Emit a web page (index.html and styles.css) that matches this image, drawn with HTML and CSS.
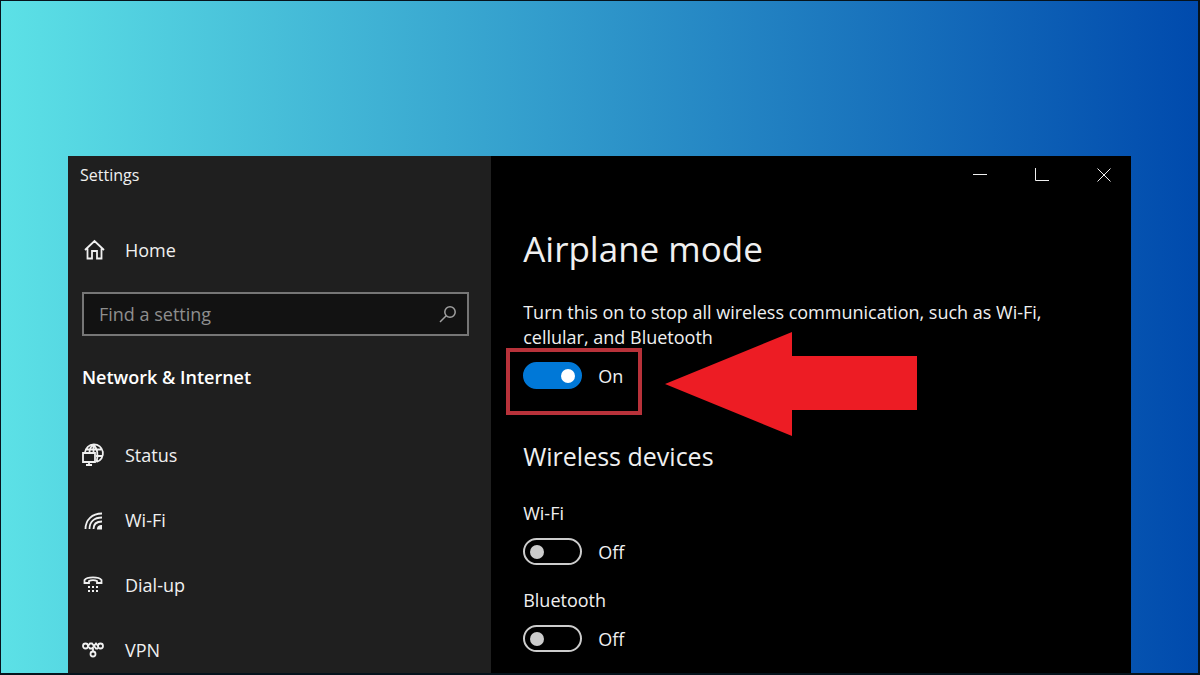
FILE: index.html
```
<!DOCTYPE html>
<html lang="en">
<head>
    <meta charset="UTF-8">
    <meta name="viewport" content="width=device-width, initial-scale=1.0">
    <title>Settings - Airplane mode</title>
    <link rel="stylesheet" href="styles.css">
</head>
<body>
    <div class="window">
        <aside class="sidebar">
            <div class="app-title">Settings</div>

            <a class="nav-link home" href="#home">
                <svg class="icon" viewBox="0 0 22 22">
                    <path d="M3 11 L12.5 2 L22 11 M5.5 9.5 V19.5 H10 V12 H15 V19.5 H19.5 V9.5"/>
                </svg>
                Home
            </a>

            <form class="search">
                <input type="text" placeholder="Find a setting" aria-label="Find a setting">
                <button type="button" aria-label="Search">
                    <svg viewBox="0 0 18 18">
                        <circle cx="11" cy="7" r="5.2"/>
                        <path d="M7.2 10.8 L1 17"/>
                    </svg>
                </button>
            </form>

            <h2 class="section-title">Network &amp; Internet</h2>

            <nav class="nav">
                <a class="nav-link" href="#status">
                    <svg class="icon" viewBox="0 0 22 22">
                        <path d="M3 8.5 A9 9 0 1 1 14.5 18 M4 5.5 H19 M14 12 H20.5 M11.5 1 V8.5 M7.5 8.5 C7.5 5 9.5 2 11.5 1 C15.5 4 16.5 12 14.5 18"/>
                        <path d="M1 9 H13 V18 H1 Z M7 18 V21 M4 21 H10"/>
                    </svg>
                    Status
                </a>
                <a class="nav-link" href="#wifi">
                    <svg class="icon" viewBox="0 0 22 22">
                        <path d="M3.5 20 C3.5 11 10 4.5 20 4.5 M7.5 20 C7.5 13 12 8.5 20 8.5 M11.5 20 C11.5 15 15 12.5 20 12.5"/>
                        <path class="solid" d="M15 20.5 C15 17 17 16 20 16 V20.5 Z"/>
                    </svg>
                    Wi-Fi
                </a>
                <a class="nav-link" href="#dialup">
                    <svg class="icon" viewBox="0 0 22 22">
                        <path d="M2.5 9 V6 C5 2.5 17 2.5 19.5 6 V9 H15 V7 C13 6 9 6 7 7 V9 Z"/>
                        <path class="solid" d="M6 12h2v2H6z M10 12h2v2h-2z M14 12h2v2h-2z M6 16h2v2H6z M10 16h2v2h-2z M14 16h2v2h-2z"/>
                    </svg>
                    Dial-up
                </a>
                <a class="nav-link" href="#vpn">
                    <svg class="icon" viewBox="0 0 22 22">
                        <circle cx="3.5" cy="7" r="2.5"/>
                        <circle cx="18.5" cy="7" r="2.5"/>
                        <circle cx="11" cy="15" r="2.5"/>
                        <path d="M6 7 L8 4.5 H10 L14 9.5 H16 M6 7 L8 9.5 H10 L14 4.5 L16 7 M11 9 V12.5"/>
                    </svg>
                    VPN
                </a>
            </nav>
        </aside>

        <main class="content">
            <div class="window-controls">
                <button type="button" aria-label="Minimize">
                    <svg viewBox="0 0 14 14"><path d="M0 6.5 H14"/></svg>
                </button>
                <button type="button" aria-label="Maximize">
                    <svg viewBox="0 0 14 14"><path d="M0.5 0 V12.5 H14"/></svg>
                </button>
                <button type="button" aria-label="Close">
                    <svg viewBox="0 0 14 14"><path d="M0.5 0.5 L13.5 13.5 M13.5 0.5 L0.5 13.5"/></svg>
                </button>
            </div>

            <h1>Airplane mode</h1>
            <p class="description">Turn this on to stop all wireless communication, such as Wi-Fi, cellular, and Bluetooth</p>

            <div class="toggle-row highlighted">
                <input class="toggle" type="checkbox" id="airplane" checked>
                <label for="airplane">On</label>
                <div class="highlight-box"></div>
                <svg class="arrow" viewBox="0 0 252 104">
                    <polygon points="0,52 127,0 127,24 252,24 252,78 127,78 127,104"/>
                </svg>
            </div>

            <h2>Wireless devices</h2>

            <div class="device">
                <h3>Wi-Fi</h3>
                <div class="toggle-row">
                    <input class="toggle" type="checkbox" id="wifi-toggle">
                    <label for="wifi-toggle">Off</label>
                </div>
            </div>

            <div class="device">
                <h3>Bluetooth</h3>
                <div class="toggle-row">
                    <input class="toggle" type="checkbox" id="bluetooth-toggle">
                    <label for="bluetooth-toggle">Off</label>
                </div>
            </div>
        </main>
    </div>
</body>
</html>
```
FILE: styles.css
```
* {
    margin: 0;
    padding: 0;
    box-sizing: border-box;
}
body {
    height: 100vh;
    display: flex;
    border: 1px solid #06131c;
    border-right-width: 2px;
    border-bottom-width: 2px;
    padding: 155px 67px 0;
    background: linear-gradient(90deg, #5ce1e6, #004aad);
    font-family: "Open Sans", "Noto Sans", sans-serif;
    font-size: 18px;
    color: #f0f0f0;
    overflow: hidden;
}
.window {
    flex: 1;
    display: flex;
    background: #000;
    overflow: hidden;
}
button {
    background: none;
    border: none;
    color: inherit;
}
svg {
    display: block;
    fill: none;
    stroke: currentColor;
}

/* Sidebar */
.sidebar {
    flex: 0 0 calc(40% - 2px);
    padding: 0 22px 0 14px;
    background: #1f1f1f;
}
.app-title {
    height: 38px;
    line-height: 38px;
    font-size: 16px;
    margin-left: -2px;
}
.nav-link {
    display: flex;
    align-items: center;
    gap: 21px;
    height: 65px;
    color: #f0f0f0;
    text-decoration: none;
}
.icon {
    width: 22px;
    height: 22px;
    stroke-width: 1.8;
    overflow: visible;
}
.solid {
    fill: currentColor;
    stroke: none;
}
.home {
    height: 44px;
    margin-top: 34px;
}
.search {
    display: flex;
    align-items: center;
    height: 44px;
    margin-top: 20px;
    border: 2px solid #767676;
    background: #121212;
    color: #a0a0a0;
}
.search input {
    flex: 1;
    height: 100%;
    padding-left: 15px;
    background: none;
    border: none;
    outline: none;
    font: inherit;
    color: inherit;
}
.search input::placeholder {
    color: #8e8e8e;
}
.search button {
    padding: 0 10px;
}
.search svg {
    width: 18px;
    height: 18px;
    stroke-width: 1.5;
}
.section-title {
    margin-top: 27px;
    font-size: 18px;
    font-weight: 600;
    line-height: 28px;
    color: #fff;
}
.nav {
    margin-top: 31px;
}

/* Main panel */
.content {
    flex: 1;
    padding-left: 32px;
}
.window-controls {
    display: flex;
    justify-content: flex-end;
    gap: 8px;
}
.window-controls button {
    display: flex;
    align-items: center;
    justify-content: center;
    width: 54px;
    height: 38px;
}
.window-controls svg {
    width: 14px;
    height: 14px;
}
h1 {
    margin-top: 31px;
    font-size: 35px;
    font-weight: 400;
    line-height: 48px;
}
.description {
    max-width: 540px;
    margin-top: 27px;
    line-height: 25px;
}
.toggle-row {
    display: flex;
    align-items: center;
    gap: 16px;
    height: 27px;
}
.toggle {
    appearance: none;
    display: flex;
    align-items: center;
    width: 59px;
    height: 27px;
    padding: 0 5px;
    border: 2px solid #ccc;
    border-radius: 14px;
}
.toggle::before {
    content: "";
    width: 14px;
    height: 14px;
    border-radius: 50%;
    background: #ccc;
}
.toggle:checked {
    justify-content: flex-end;
    background: #0078d7;
    border-color: #0078d7;
}
.toggle:checked::before {
    background: #fff;
}
.highlighted {
    position: relative;
    margin-top: 12px;
}
.highlight-box {
    position: absolute;
    top: -14px;
    left: -17px;
    width: 136px;
    height: 67px;
    border: 4px solid #b8323a;
}
.arrow {
    position: absolute;
    top: -30px;
    left: 142px;
    width: 252px;
    height: 104px;
    fill: #ed1c24;
    stroke: none;
}
.content h2 {
    margin-top: 51px;
    font-size: 25px;
    font-weight: 400;
    line-height: 32px;
}
.device {
    margin-bottom: 23px;
}
.content h2 + .device {
    margin-top: 29px;
}
h3 {
    margin-bottom: 13px;
    font-size: 18px;
    font-weight: 400;
    line-height: 24px;
}
```
